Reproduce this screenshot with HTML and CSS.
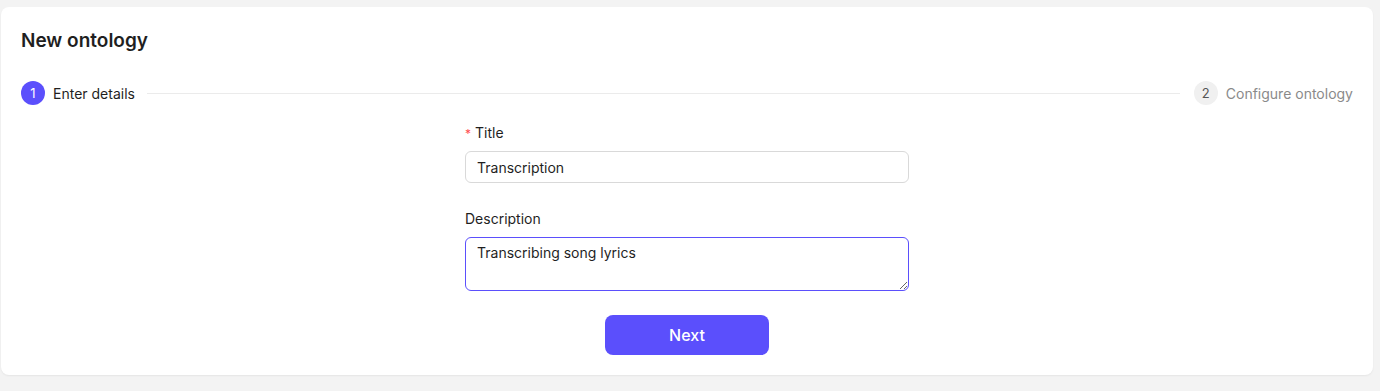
FILE: index.html
```html
<!DOCTYPE html>
<html lang="en">
<head>
    <meta charset="UTF-8">
    <title>New ontology</title>
    <link rel="stylesheet" href="styles.css">
</head>
<body>
<div class="card">
    <h1 class="card-title">New ontology</h1>

    <div class="steps">
        <div class="step step-active">
            <span class="step-icon">1</span>
            <span class="step-label">Enter details</span>
        </div>
        <div class="step-line"></div>
        <div class="step">
            <span class="step-icon">2</span>
            <span class="step-label">Configure ontology</span>
        </div>
    </div>

    <form class="form" onsubmit="return false;">
        <label class="field">
            <span class="field-label"><span class="required">*</span>Title</span>
            <input class="input" type="text" name="title" value="Transcription" />
        </label>
        <label class="field">
            <span class="field-label">Description</span>
            <textarea class="input textarea input-focus" name="description">Transcribing song lyrics</textarea>
        </label>
        <button class="btn-primary" type="submit">Next</button>
    </form>
</div>
</body>
</html>
```

FILE: styles.css
```css
body {
    margin: 0;
    padding: 7px 7px 16px 1px;
    background: #f3f3f3;
    font-family: Inter, "Noto Sans", sans-serif;
    color: #1f1f1f;
}

.card {
    background: white;
    border-radius: 8px;
    box-shadow: 0 1px 2px rgba(0, 0, 0, 0.06);
    padding: 22px 20px 20px 20px;
}

.card-title {
    margin: 0;
    font-size: 19px;
    font-weight: 600;
    line-height: 24px;
    color: #1f1f1f;
}

.steps {
    display: flex;
    align-items: center;
    margin-top: 28px;
}

.step {
    display: flex;
    align-items: center;
    gap: 8px;
}

.step-icon {
    width: 24px;
    height: 24px;
    border-radius: 50%;
    background: #f0f0f0;
    color: #555;
    font-size: 13px;
    line-height: 24px;
    text-align: center;
}

.step-label {
    font-size: 14px;
    color: #8a8a8a;
}

.step-active .step-icon {
    background: #5b4ffc;
    color: white;
}

.step-active .step-label {
    color: #1f1f1f;
}

.step-line {
    flex: 1;
    height: 1px;
    background: #ebebeb;
    margin: 0 14px 0 12px;
}

.form {
    width: 444px;
    margin: 19px auto 0 auto;
    display: flex;
    flex-direction: column;
}

.field {
    display: flex;
    flex-direction: column;
    margin-bottom: 27px;
}

.field-label {
    font-size: 14px;
    line-height: 18px;
    margin-bottom: 8px;
}

.required {
    color: #ff4d4f;
    margin-right: 4px;
    font-size: 12px;
}

.input {
    box-sizing: border-box;
    height: 32px;
    padding: 4px 11px;
    border: 1px solid #d9d9d9;
    border-radius: 6px;
    font-family: inherit;
    font-size: 14px;
    color: #1f1f1f;
    outline: none;
}

.textarea {
    height: 54px;
    margin-top: 1px;
    resize: vertical;
    line-height: 22px;
}

.input-focus {
    border-color: #5b4ffc;
}

.btn-primary {
    align-self: center;
    width: 164px;
    height: 40px;
    margin-top: -3px;
    border: none;
    border-radius: 8px;
    background: #5b4ffc;
    color: white;
    font-family: inherit;
    font-size: 16px;
    font-weight: 500;
}
```
